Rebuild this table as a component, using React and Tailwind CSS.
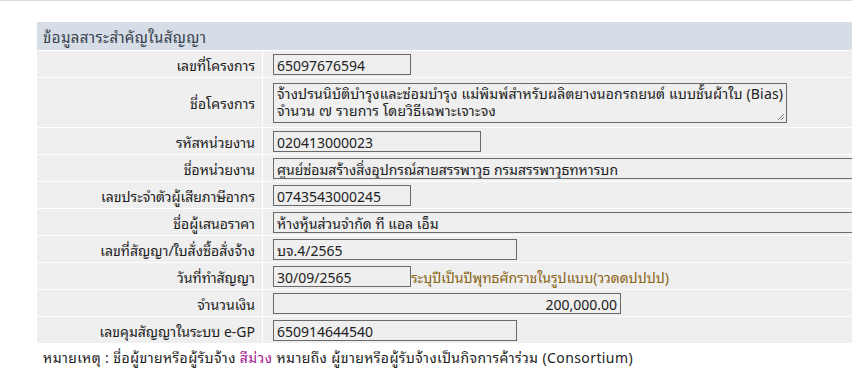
import React from "react";

const FONT = "font-['Tahoma','Noto_Sans_Thai_Looped','Noto_Sans_Thai','Noto_Sans','DejaVu_Sans',sans-serif]";

function Row({ label, children, tall }) {
  return (
    <div className="flex gap-[1px]">
      <div
        className={`w-[225px] shrink-0 bg-[#efefef] flex items-center justify-end pr-[7px] ${tall ? "h-[49px]" : "h-[26px]"}`}
      >
        {label}
      </div>
      <div className="flex-1 bg-[#efefef] flex items-center pl-[10px]">{children}</div>
    </div>
  );
}

function Field({ value, w, right }) {
  return (
    <div
      className={`h-[21px] border border-[#6a6a6a] bg-[#efefef] flex items-center px-[3px] whitespace-nowrap overflow-hidden ${w} ${right ? "justify-end" : ""}`}
    >
      {value}
    </div>
  );
}

export default function App() {
  return (
    <div className={`w-[852px] h-[381px] overflow-hidden bg-white text-[14px] text-[#222] ${FONT}`}>
      <div className="h-[1px] bg-[#dcdcdc]" />
      <div className="pl-[37px] pt-[21px] w-[960px]">
        <div className="flex flex-col gap-[1px]">
          <div className="h-[28px] bg-[#d6dde6] flex items-center pl-[6px] text-[15px] tracking-[0.4px] text-[#36414e]">
            ข้อมูลสาระสำคัญในสัญญา
          </div>
          <Row label="เลขที่โครงการ">
            <Field value="65097676594" w="w-[138px]" />
          </Row>
          <Row label="ชื่อโครงการ" tall>
            <div className="relative w-[514px] h-[40px] border border-[#6a6a6a] bg-[#efefef] px-[3px] leading-[17px] tracking-[0.18px] overflow-hidden">
              <div className="whitespace-nowrap">จ้างปรนนิบัติบำรุงและซ่อมบำรุง แม่พิมพ์สำหรับผลิตยางนอกรถยนต์ แบบชั้นผ้าใบ (Bias)</div>
              <div>จำนวน ๗ รายการ โดยวิธีเฉพาะเจาะจง</div>
              <svg className="absolute right-[1px] bottom-[1px]" width="8" height="8" viewBox="0 0 8 8">
                <line x1="7" y1="1" x2="1" y2="7" stroke="#7a7a7a" strokeWidth="1" />
                <line x1="7" y1="4" x2="4" y2="7" stroke="#7a7a7a" strokeWidth="1" />
              </svg>
            </div>
          </Row>
          <Row label="รหัสหน่วยงาน">
            <Field value="020413000023" w="w-[208px]" />
          </Row>
          <Row label="ชื่อหน่วยงาน">
            <Field value="ศูนย์ซ่อมสร้างสิ่งอุปกรณ์สายสรรพาวุธ กรมสรรพาวุธทหารบก" w="w-[640px]" />
          </Row>
          <Row label="เลขประจำตัวผู้เสียภาษีอากร">
            <Field value="0743543000245" w="w-[138px]" />
          </Row>
          <Row label="ชื่อผู้เสนอราคา">
            <Field value="ห้างหุ้นส่วนจำกัด ที แอล เอ็ม" w="w-[640px]" />
          </Row>
          <Row label="เลขที่สัญญา/ใบสั่งซื้อสั่งจ้าง">
            <Field value="บจ.4/2565" w="w-[244px]" />
          </Row>
          <Row label="วันที่ทำสัญญา">
            <Field value="30/09/2565" w="w-[138px]" />
            <span className="text-[#8a6414]">ระบุปีเป็นปีพุทธศักราชในรูปแบบ(ววดดปปปป)</span>
          </Row>
          <Row label="จำนวนเงิน">
            <Field value="200,000.00" w="w-[348px]" right />
          </Row>
          <Row label="เลขคุมสัญญาในระบบ e-GP">
            <Field value="650914644540" w="w-[244px]" />
          </Row>
        </div>
        <div className="pl-[6px] pt-[3px] tracking-[0.4px]">
          หมายเหตุ : ชื่อผู้ขายหรือผู้รับจ้าง <span className="text-[#a0168f]">สีม่วง</span> หมายถึง
          ผู้ขายหรือผู้รับจ้างเป็นกิจการค้าร่วม (Consortium)
        </div>
      </div>
    </div>
  );
}
